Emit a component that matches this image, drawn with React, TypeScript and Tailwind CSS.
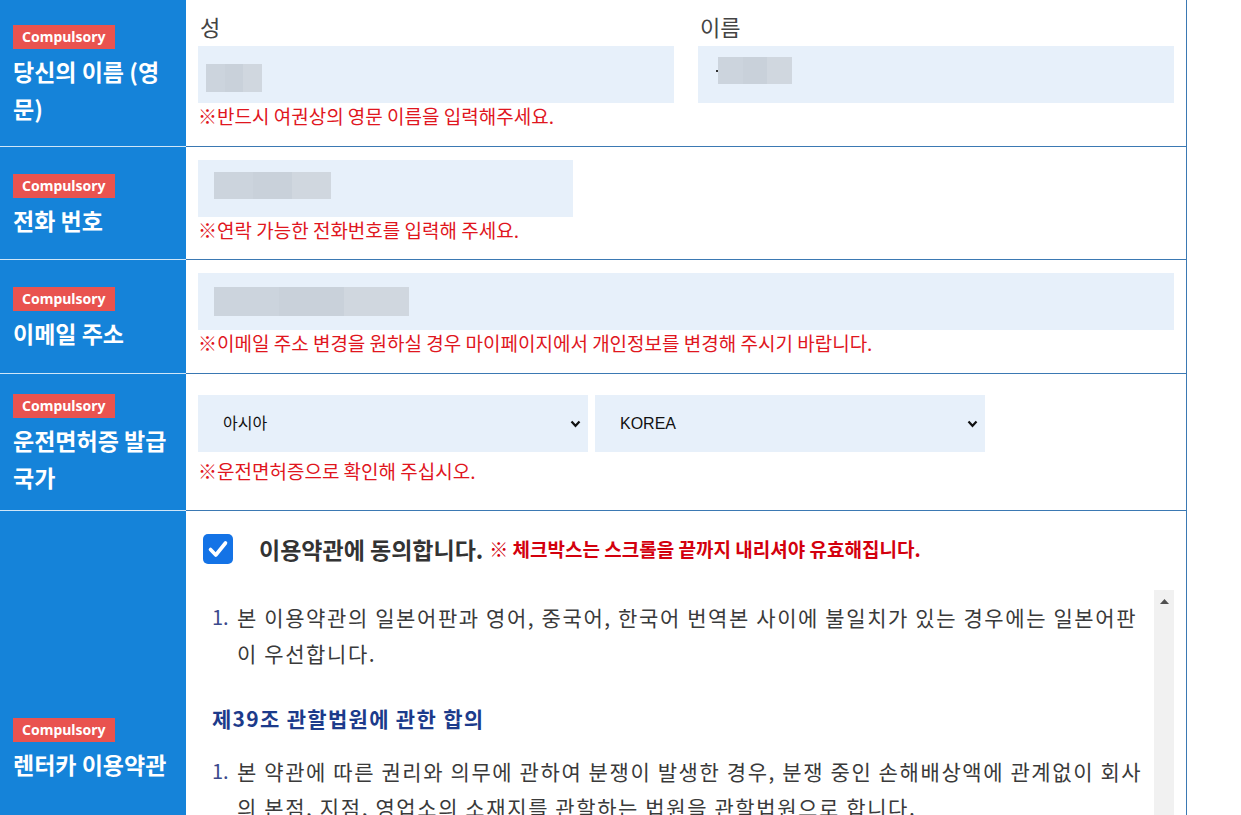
import React from "react";

function Badge() {
  return (
    <span className="self-start inline-block bg-[#e9534f] text-white font-bold text-[14px] leading-[24px] px-[9px] font-['Noto_Sans','Liberation_Sans',sans-serif]">
      Compulsory
    </span>
  );
}

function LabelCell({ children, last }: { children: React.ReactNode; last?: boolean }) {
  return (
    <div
      className={
        "w-[186px] shrink-0 bg-[#1583d9] pl-[13px] pr-[13px] pt-[20px] pb-[14px] flex flex-col justify-center " +
        (last ? "" : "border-b border-[#cfe6f8]")
      }
    >
      <Badge />
      <div className="mt-[4px] text-white font-bold text-[23px] leading-[37px]">{children}</div>
    </div>
  );
}

function Blur({ w, h, mt, ml }: { w: number; h: number; mt: number; ml: number }) {
  return (
    <div className="flex" style={{ marginTop: mt, marginLeft: ml, width: w, height: h }}>
      <div className="h-full flex-1 bg-[#ccd4dd]" />
      <div className="h-full flex-1 bg-[#c9d1da]" />
      <div className="h-full flex-1 bg-[#d0d7df]" />
    </div>
  );
}

function Note({ children, className = "" }: { children: React.ReactNode; className?: string }) {
  return <div className={"text-[19px] leading-[26px] text-[#e0161e] " + className}>{children}</div>;
}

function Chevron() {
  return (
    <svg width="11" height="8" viewBox="0 0 11 8" className="shrink-0">
      <polyline points="1.5,1.5 5.5,5.8 9.5,1.5" fill="none" stroke="#111" strokeWidth="2.2" />
    </svg>
  );
}

function SelectBox({ value }: { value: string }) {
  return (
    <div className="w-[390px] h-[57px] bg-[#e7f0fa] flex items-center justify-between pl-[25px] pr-[7px] text-[16px] text-[#111] font-['Liberation_Sans','Noto_Sans_CJK_KR',sans-serif]">
      <span>{value}</span>
      <Chevron />
    </div>
  );
}

export default function App() {
  return (
    <div className="w-[1241px] min-h-[815px] bg-white font-['Noto_Sans_CJK_KR',sans-serif] text-[#333]">
      <div className="w-[1187px] border-r border-[#3b79b3]">
        {/* Row 1 */}
        <div className="flex">
          <LabelCell>당신의 이름 (영문)</LabelCell>
          <div className="flex-1 border-b border-[#3b79b3] px-[12px] pt-[10px] pb-[17px]">
            <div className="grid grid-cols-2 gap-x-[24px]">
              <div>
                <div className="text-[22px] leading-[32px] text-[#444] pl-[2px]">성</div>
                <div className="mt-[4px] h-[57px] bg-[#e7f0fa] flex items-start">
                  <Blur w={56} h={28} mt={18} ml={8} />
                </div>
                <Note>※반드시 여권상의 영문 이름을 입력해주세요.</Note>
              </div>
              <div>
                <div className="text-[22px] leading-[32px] text-[#444] pl-[2px]">이름</div>
                <div className="mt-[4px] h-[57px] bg-[#e7f0fa] flex items-start">
                  <div className="mt-[24px] ml-[18px] w-[2px] h-[2px] bg-[#333]" />
                  <Blur w={74} h={27} mt={11} ml={0} />
                </div>
              </div>
            </div>
          </div>
        </div>

        {/* Row 2 */}
        <div className="flex">
          <LabelCell>전화 번호</LabelCell>
          <div className="flex-1 border-b border-[#3b79b3] px-[12px] pt-[13px] pb-[16px]">
            <div className="w-[375px] h-[57px] bg-[#e7f0fa] flex items-start">
              <Blur w={117} h={27} mt={12} ml={16} />
            </div>
            <Note>※연락 가능한 전화번호를 입력해 주세요.</Note>
          </div>
        </div>

        {/* Row 3 */}
        <div className="flex">
          <LabelCell>이메일 주소</LabelCell>
          <div className="flex-1 border-b border-[#3b79b3] px-[12px] pt-[13px] pb-[17px]">
            <div className="h-[57px] bg-[#e7f0fa] flex items-start">
              <Blur w={195} h={29} mt={14} ml={16} />
            </div>
            <Note>※이메일 주소 변경을 원하실 경우 마이페이지에서 개인정보를 변경해 주시기 바랍니다.</Note>
          </div>
        </div>

        {/* Row 4 */}
        <div className="flex">
          <LabelCell>운전면허증 발급 국가</LabelCell>
          <div className="flex-1 border-b border-[#3b79b3] px-[12px] flex flex-col justify-center pb-[5px]">
            <div className="flex gap-[7px]">
              <SelectBox value="아시아" />
              <SelectBox value="KOREA" />
            </div>
            <Note className="mt-[6px]">※운전면허증으로 확인해 주십시오.</Note>
          </div>
        </div>

        {/* Row 5 */}
        <div className="flex">
          <LabelCell last>렌터카 이용약관</LabelCell>
          <div className="flex-1 px-[12px] pt-[23px] pb-[23px]">
            <div className="flex items-center h-[30px] pl-[5px]">
              <div className="w-[30px] h-[30px] rounded-[5px] bg-[#1473e6] flex items-center justify-center shrink-0">
                <svg width="30" height="30" viewBox="0 0 30 30">
                  <polyline
                    points="7.5,15.5 12.8,21 22.5,9"
                    fill="none"
                    stroke="#fff"
                    strokeWidth="3.6"
                    strokeLinecap="round"
                    strokeLinejoin="round"
                  />
                </svg>
              </div>
              <span className="ml-[26px] text-[23px] font-bold text-[#333] whitespace-nowrap">이용약관에 동의합니다.</span>
              <span className="ml-[6px] text-[19px] font-bold text-[#d3000d] whitespace-nowrap">
                ※ 체크박스는 스크롤을 끝까지 내리셔야 유효해집니다.
              </span>
            </div>

            <div className="mt-[26px] h-[370px] flex overflow-hidden">
              <div className="flex-1 pl-[14px] pt-[9px] overflow-hidden text-[21px] leading-[36px] text-[#3a3a3a] tracking-[1.6px]">
                <div className="grid grid-cols-[25px_1fr]">
                  <span className="text-[#3b4a8c] tracking-normal text-[20px]">1.</span>
                  <span className="whitespace-nowrap">
                    본 이용약관의 일본어판과 영어, 중국어, 한국어 번역본 사이에 불일치가 있는 경우에는 일본어판
                    <br />이 우선합니다.
                  </span>
                </div>
                <div className="mt-[29px] font-bold text-[#1c3b8b] tracking-[1.3px]">제39조 관할법원에 관한 합의</div>
                <div className="mt-[17px] grid grid-cols-[25px_1fr]">
                  <span className="text-[#3b4a8c] tracking-normal text-[20px]">1.</span>
                  <span className="whitespace-nowrap">
                    본 약관에 따른 권리와 의무에 관하여 분쟁이 발생한 경우, 분쟁 중인 손해배상액에 관계없이 회사
                    <br />의 본점, 지점, 영업소의 소재지를 관할하는 법원을 관할법원으로 합니다.
                  </span>
                </div>
                <div className="mt-[29px] font-bold text-[#1c3b8b] tracking-[1.3px]">부칙</div>
                <div className="mt-[17px] whitespace-nowrap">본 약관은 2023년 4월 1일부터 시행합니다.</div>
              </div>
              <div className="w-[20px] shrink-0 bg-[#f1f1f1] flex justify-center pt-[9px]">
                <svg width="9" height="5" viewBox="0 0 9 5">
                  <polygon points="0,5 4.5,0 9,5" fill="#505050" />
                </svg>
              </div>
            </div>
          </div>
        </div>
      </div>
    </div>
  );
}
